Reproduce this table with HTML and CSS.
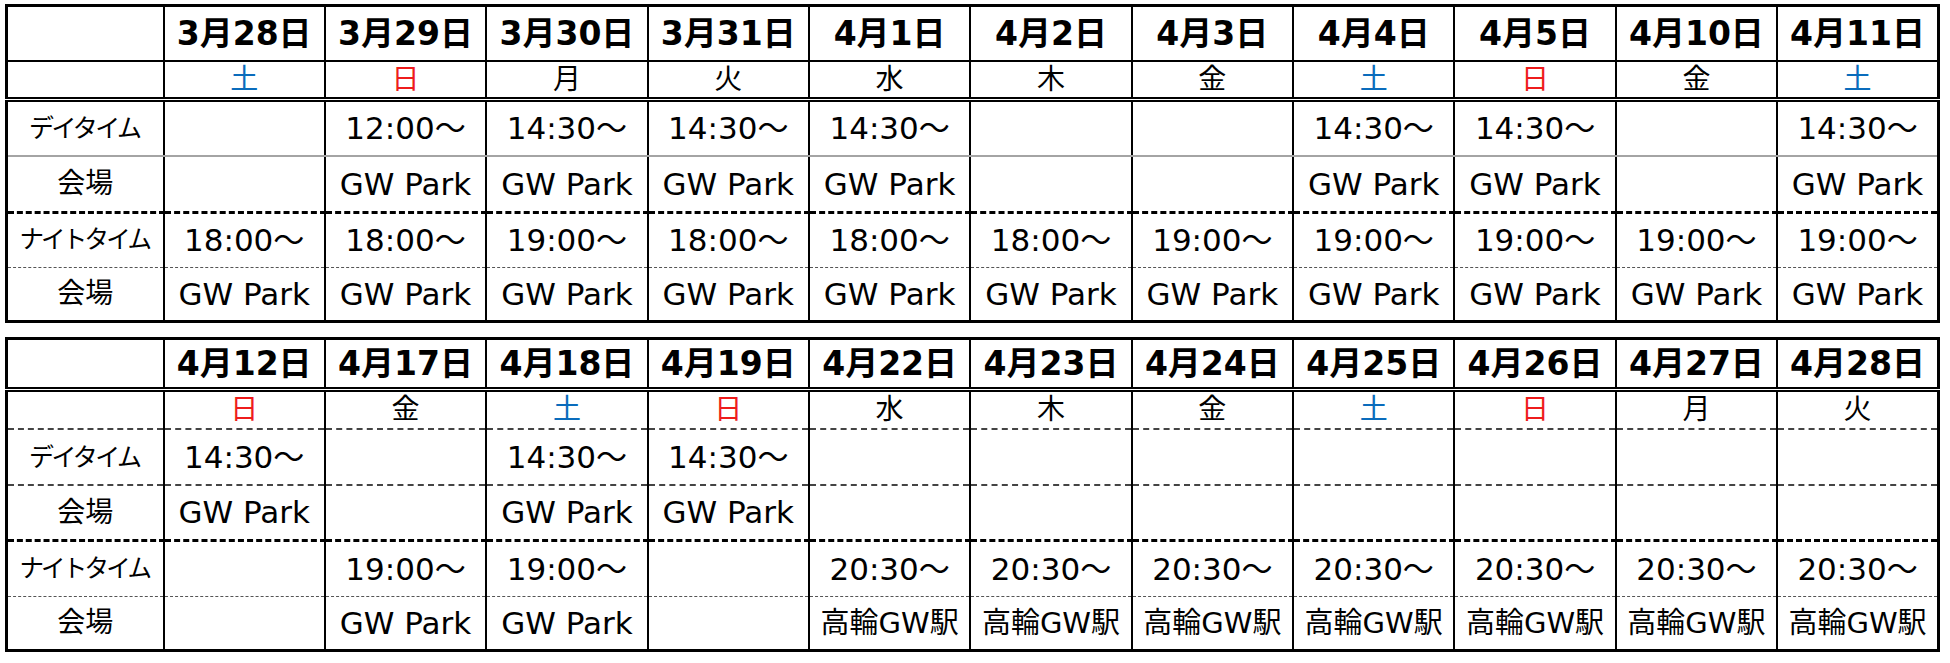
FILE: index.html
```html
<!DOCTYPE html>
<html lang="ja">
<head>
<meta charset="utf-8">
<title>スケジュール</title>
<link rel="stylesheet" href="styles.css">
</head>
<body>
<table class="sched t1">
  <colgroup><col class="c-label"><col span="11"></colgroup>
  <tr class="r-head"><td></td><td>3月28日</td><td>3月29日</td><td>3月30日</td><td>3月31日</td><td>4月1日</td><td>4月2日</td><td>4月3日</td><td>4月4日</td><td>4月5日</td><td>4月10日</td><td>4月11日</td></tr>
  <tr class="r-dow"><td></td><td class="sat">土</td><td class="sun">日</td><td>月</td><td>火</td><td>水</td><td>木</td><td>金</td><td class="sat">土</td><td class="sun">日</td><td>金</td><td class="sat">土</td></tr>
  <tr class="r-day"><td class="lbl-day">デイタイム</td><td></td><td>12:00～</td><td>14:30～</td><td>14:30～</td><td>14:30～</td><td></td><td></td><td>14:30～</td><td>14:30～</td><td></td><td>14:30～</td></tr>
  <tr class="r-dven"><td class="lbl-ven">会場</td><td></td><td>GW Park</td><td>GW Park</td><td>GW Park</td><td>GW Park</td><td></td><td></td><td>GW Park</td><td>GW Park</td><td></td><td>GW Park</td></tr>
  <tr class="r-night"><td class="lbl-night">ナイトタイム</td><td>18:00～</td><td>18:00～</td><td>19:00～</td><td>18:00～</td><td>18:00～</td><td>18:00～</td><td>19:00～</td><td>19:00～</td><td>19:00～</td><td>19:00～</td><td>19:00～</td></tr>
  <tr class="r-nven"><td class="lbl-ven">会場</td><td>GW Park</td><td>GW Park</td><td>GW Park</td><td>GW Park</td><td>GW Park</td><td>GW Park</td><td>GW Park</td><td>GW Park</td><td>GW Park</td><td>GW Park</td><td>GW Park</td></tr>
</table>
<table class="sched t2">
  <colgroup><col class="c-label"><col span="11"></colgroup>
  <tr class="r-head"><td></td><td>4月12日</td><td>4月17日</td><td>4月18日</td><td>4月19日</td><td>4月22日</td><td>4月23日</td><td>4月24日</td><td>4月25日</td><td>4月26日</td><td>4月27日</td><td>4月28日</td></tr>
  <tr class="r-dow"><td></td><td class="sun">日</td><td>金</td><td class="sat">土</td><td class="sun">日</td><td>水</td><td>木</td><td>金</td><td class="sat">土</td><td class="sun">日</td><td>月</td><td>火</td></tr>
  <tr class="r-day"><td class="lbl-day">デイタイム</td><td>14:30～</td><td></td><td>14:30～</td><td>14:30～</td><td></td><td></td><td></td><td></td><td></td><td></td><td></td></tr>
  <tr class="r-dven"><td class="lbl-ven">会場</td><td>GW Park</td><td></td><td>GW Park</td><td>GW Park</td><td></td><td></td><td></td><td></td><td></td><td></td><td></td></tr>
  <tr class="r-night"><td class="lbl-night">ナイトタイム</td><td></td><td>19:00～</td><td>19:00～</td><td></td><td>20:30～</td><td>20:30～</td><td>20:30～</td><td>20:30～</td><td>20:30～</td><td>20:30～</td><td>20:30～</td></tr>
  <tr class="r-nven"><td class="lbl-ven">会場</td><td></td><td>GW Park</td><td>GW Park</td><td></td><td class="st">高輪GW駅</td><td class="st">高輪GW駅</td><td class="st">高輪GW駅</td><td class="st">高輪GW駅</td><td class="st">高輪GW駅</td><td class="st">高輪GW駅</td><td class="st">高輪GW駅</td></tr>
</table>
</body>
</html>
```
FILE: styles.css
```css
html, body {
  margin: 0;
  padding: 0;
  background: #fff;
}
body {
  padding: 4px 0 0 5px;
  font-family: "DejaVu Sans", "Noto Sans CJK JP", sans-serif;
  color: #000;
}
.sched {
  border-collapse: collapse;
  table-layout: fixed;
  width: 1935px;
  border: 3px solid #000;
}
.t2 {
  margin-top: 14px;
}
.c-label {
  width: 157px;
}
.sched td {
  border-left: 2px solid #000;
  border-right: 2px solid #000;
  padding: 0;
  text-align: center;
  vertical-align: middle;
  font-size: 31px;
  line-height: 1;
  white-space: nowrap;
  overflow: hidden;
}
.r-head td {
  height: 53px;
  font-weight: bold;
}
.sched .r-head td { font-size: 33px; }
.r-dow td {
  height: 35px;
}
.sched .r-dow td { font-size: 28px; }
.r-day td { height: 53px; }
.r-dven td { height: 54px; }
.r-night td { height: 53px; }
.r-nven td { height: 52px; }

.t1 .r-head td { border-bottom: 2px solid #000; }
.t1 .r-dow td { border-bottom: 5px double #000; }
.t1 .r-day td { border-bottom: 2px solid #a4a4a4; }
.t1 .r-dven td { border-bottom: 3px dashed #000; }
.t1 .r-night td { border-bottom: 1px dashed #555; }

.t2 .r-head td { height: 47px; border-bottom: 5px double #000; }
.t2 .r-dow td { height: 36px; border-bottom: 2px dashed #444; }
.t2 .r-day td { height: 54px; border-bottom: 2px dashed #444; }
.t2 .r-dven td { height: 53px; border-bottom: 3px dashed #000; }
.t2 .r-night td { height: 54px; border-bottom: 1px dashed #555; }

.sat { color: #0a6cbc; }
.sun { color: #ee1c1c; }

.sched td.lbl-day { font-size: 25px; letter-spacing: -2.6px; text-indent: -2px; }
.sched td.lbl-night { font-size: 24.5px; letter-spacing: -2.8px; text-indent: -2px; }
.sched td.lbl-ven { font-size: 28px; }
.sched td.st { font-size: 29px; }
```
